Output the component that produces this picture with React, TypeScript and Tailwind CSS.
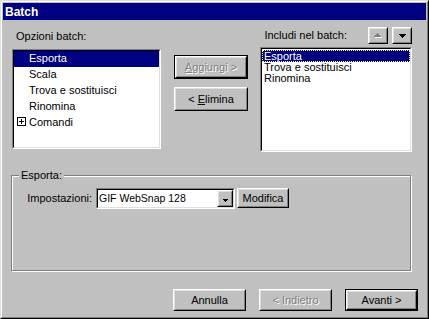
import type { ReactNode } from "react";

const disabledText = "text-[#808080] [text-shadow:1px_1px_0_#fff]";

function Raised({ className = "", children }: { className?: string; children?: ReactNode }) {
  return (
    <div className={`border border-t-white border-l-white border-r-black border-b-black ${className}`}>
      <div className="w-full h-full flex items-center justify-center border border-t-[#dfdfdf] border-l-[#dfdfdf] border-r-[#808080] border-b-[#808080] bg-[#c0c0c0]">
        {children}
      </div>
    </div>
  );
}

function Button({
  className = "",
  primary = false,
  disabled = false,
  children,
}: {
  className?: string;
  primary?: boolean;
  disabled?: boolean;
  children: ReactNode;
}) {
  const label = <span className={`leading-[13px] ${disabled ? disabledText : ""}`}>{children}</span>;
  if (primary) {
    return (
      <div className={`border border-black ${className}`}>
        <Raised className="w-full h-full">{label}</Raised>
      </div>
    );
  }
  return <Raised className={className}>{label}</Raised>;
}

function Sunken({ className = "", children }: { className?: string; children?: ReactNode }) {
  return (
    <div className={`border border-t-[#808080] border-l-[#808080] border-r-white border-b-white ${className}`}>
      <div className="w-full h-full border border-t-black border-l-black border-r-[#dfdfdf] border-b-[#dfdfdf] bg-white overflow-hidden">
        {children}
      </div>
    </div>
  );
}

// pixel-row triangles so they stay crisp
function Tri({ dir, color, size = 4 }: { dir: "up" | "down"; color: string; size?: number }) {
  const w = size * 2 - 1;
  const rows = Array.from({ length: size }, (_, i) => {
    const width = dir === "up" ? 1 + i * 2 : w - i * 2;
    return <rect key={i} x={(w - width) / 2} y={i} width={width} height={1} fill={color} />;
  });
  return (
    <svg width={w} height={size} shapeRendering="crispEdges">
      {rows}
    </svg>
  );
}

export default function App() {
  return (
    <div className="w-[429px] h-[319px] border border-t-[#dfdfdf] border-l-[#dfdfdf] border-r-black border-b-black font-['Liberation_Sans',Arial,sans-serif] text-[11px] text-black">
      <div className="h-full border border-t-white border-l-white border-r-[#808080] border-b-[#808080] bg-[#c0c0c0] p-px flex flex-col">
        {/* title bar */}
        <div className="h-[17px] bg-[#000080] text-white font-bold text-[12px] pl-[2px] flex items-center">
          Batch
        </div>

        {/* top section */}
        <div className="flex items-start ml-[9px]">
          {/* available options */}
          <div className="w-[149px] pt-[10px]">
            <div className="h-[13px] leading-[13px] pl-[4px]">Opzioni batch:</div>
            <Sunken className="mt-[6px] h-[100px]">
              <div className="h-[16px] leading-[14px] bg-[#000080] text-white pl-[15px]">Esporta</div>
              <div className="h-[16px] leading-[14px] pl-[15px]">Scala</div>
              <div className="h-[16px] leading-[14px] pl-[15px]">Trova e sostituisci</div>
              <div className="h-[16px] leading-[14px] pl-[15px]">Rinomina</div>
              <div className="h-[16px] leading-[14px] pl-[3px] flex items-start">
                <div className="mt-[2px] w-[9px] h-[9px] border border-black flex items-center justify-center">
                  <svg width="5" height="5" shapeRendering="crispEdges">
                    <rect x="0" y="2" width="5" height="1" fill="#000" />
                    <rect x="2" y="0" width="1" height="5" fill="#000" />
                  </svg>
                </div>
                <span className="ml-[3px]">Comandi</span>
              </div>
            </Sunken>
          </div>

          {/* add / remove */}
          <div className="ml-[13px] pt-[35px] flex flex-col">
            <Button primary disabled className="w-[74px] h-[24px]">
              <span className="underline">A</span>ggiungi &gt;
            </Button>
            <Button className="mt-[8px] w-[74px] h-[24px]">
              &lt; <span className="underline">E</span>limina
            </Button>
          </div>

          {/* included list */}
          <div className="ml-[12px] w-[152px] pt-[7px]">
            <div className="h-[17px] flex items-center justify-end">
              <span className="leading-[13px] mr-[21px]">Includi nel batch:</span>
              <Raised className="w-[20px] h-[17px]">
                <svg width="8" height="5" shapeRendering="crispEdges">
                  <g transform="translate(1,1)">
                    <rect x="3" y="0" width="1" height="1" fill="#fff" />
                    <rect x="2" y="1" width="3" height="1" fill="#fff" />
                    <rect x="1" y="2" width="5" height="1" fill="#fff" />
                    <rect x="0" y="3" width="7" height="1" fill="#fff" />
                  </g>
                  <rect x="3" y="0" width="1" height="1" fill="#808080" />
                  <rect x="2" y="1" width="3" height="1" fill="#808080" />
                  <rect x="1" y="2" width="5" height="1" fill="#808080" />
                  <rect x="0" y="3" width="7" height="1" fill="#808080" />
                </svg>
              </Raised>
              <Raised className="ml-[4px] w-[20px] h-[17px]">
                <Tri dir="down" color="#000" />
              </Raised>
            </div>
            <Sunken className="mt-[3px] h-[105px]">
              <div className="pt-px">
                <div className="h-[12px] leading-[10px] border border-dotted border-[#ffffa0] bg-[#000080] text-white pl-px">
                  Esporta
                </div>
                <div className="h-[11px] leading-[11px] pl-[2px]">Trova e sostituisci</div>
                <div className="h-[11px] leading-[11px] pl-[2px]">Rinomina</div>
              </div>
            </Sunken>
          </div>
        </div>

        {/* export group */}
        <fieldset className="mt-[17px] ml-[8px] w-[400px] h-[102px] border border-[#808080] shadow-[inset_1px_1px_0_#fff,1px_1px_0_#fff] pl-[7px]">
          <legend className="relative bg-[#c0c0c0] px-[2px] leading-[13px]">Esporta:</legend>
          <div className="mt-[6px] flex items-start">
            <div className="ml-[6px] w-[67px] h-[20px] leading-[20px] text-right whitespace-nowrap">Impostazioni:</div>
            <Sunken className="ml-[4px] w-[139px] h-[21px]">
              <div className="h-full flex items-center">
                <span className="flex-1 pl-px leading-[13px] text-[10.5px]">GIF WebSnap 128</span>
                <Raised className="w-[16px] h-[17px]">
                  <span className="mt-[3px] flex">
                    <Tri dir="down" color="#000" size={3} />
                  </span>
                </Raised>
              </div>
            </Sunken>
            <Button className="ml-[2px] w-[52px] h-[20px]">Modifica</Button>
          </div>
        </fieldset>

        {/* wizard buttons */}
        <div className="mt-[18px] pr-[8px] flex justify-end gap-[13px]">
          <Button className="w-[73px] h-[22px]">Annulla</Button>
          <Button disabled className="w-[73px] h-[22px]">
            &lt; Indietro
          </Button>
          <Button primary className="w-[73px] h-[22px]">
            Avanti &gt;
          </Button>
        </div>
      </div>
    </div>
  );
}
